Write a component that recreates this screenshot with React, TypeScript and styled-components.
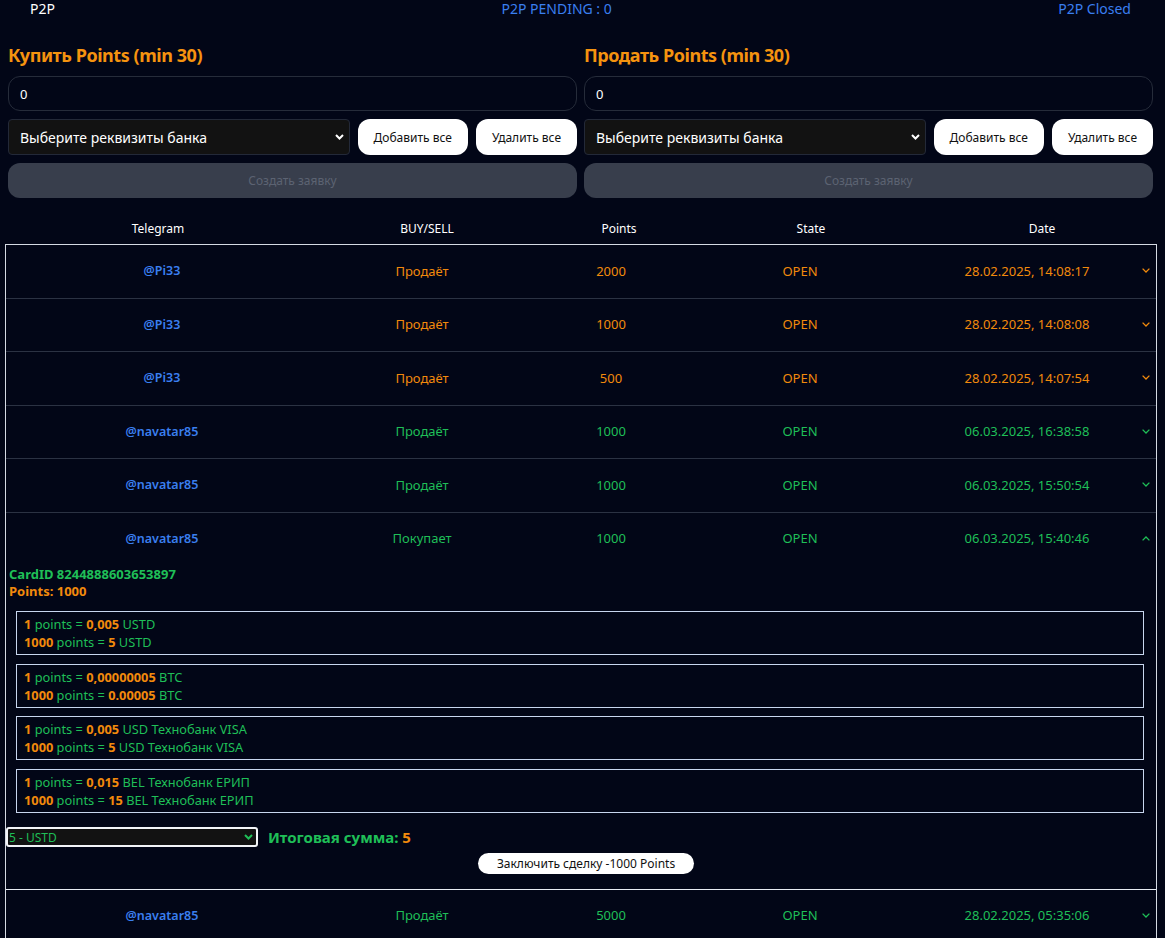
import React from "react";
import styled, { createGlobalStyle } from "styled-components";

const ORANGE = "#f28a0c";
const TITLE_ORANGE = "#f5930f";
const GREEN = "#1fbf57";
const BLUE = "#3a7ff0";

const Global = createGlobalStyle`
  html, body { margin: 0; padding: 0; background: #020617; }
  body { font-family: "Noto Sans", "Open Sans", sans-serif; color: #fff; }
  * { box-sizing: border-box; }
`;

const Page = styled.div`
  min-height: 938px;
  background: #020617;
  overflow: hidden;
`;

const TopBar = styled.div`
  display: flex;
  justify-content: space-between;
  padding: 0 34px 0 30px;
  height: 17px;
  font-size: 14px;
  line-height: 17px;
`;

const TopItem = styled.span<{ $tone?: "white" | "blue" }>`
  color: ${(p) => (p.$tone === "blue" ? BLUE : "#ffffff")};
`;

const Forms = styled.div`
  display: grid;
  grid-template-columns: 1fr 1fr;
  gap: 7px;
  padding: 0 12px 0 8px;
  margin-top: 26px;
`;

const FormCol = styled.div`
  display: flex;
  flex-direction: column;
  gap: 8px;
`;

const Title = styled.h2`
  margin: 0 0 1px;
  font-size: 18px;
  line-height: 24px;
  font-weight: 700;
  color: ${TITLE_ORANGE};
  letter-spacing: -0.45px;
`;

const AmountInput = styled.input`
  height: 35px;
  width: 100%;
  border: 1px solid #262c3a;
  border-radius: 12px;
  background: #020617;
  color: #fff;
  font-family: inherit;
  font-size: 13px;
  padding: 0 11px;
  outline: none;
`;

const SelectRow = styled.div`
  display: flex;
  gap: 8px;
  height: 36px;
`;

const SelectWrap = styled.div<{ $w?: string }>`
  position: relative;
  flex: ${(p) => (p.$w ? "none" : "1")};
  width: ${(p) => p.$w || "auto"};
  display: flex;
`;

const BankSelect = styled.select`
  appearance: none;
  width: 100%;
  height: 100%;
  background: #121212;
  color: #fff;
  border: 1px solid #232938;
  border-radius: 4px;
  font-family: inherit;
  font-size: 14px;
  padding: 0 28px 0 11px;
  outline: none;
`;

const SelectArrow = styled.span<{ $right: number; $color: string }>`
  position: absolute;
  right: ${(p) => p.$right}px;
  top: 50%;
  transform: translateY(-50%);
  display: flex;
  color: ${(p) => p.$color};
  pointer-events: none;
`;

const PillButton = styled.button`
  background: #fff;
  color: #111;
  border: none;
  border-radius: 12px;
  font-family: inherit;
  font-size: 12px;
  padding: 0 16px;
  white-space: nowrap;
`;

const CreateButton = styled.button`
  height: 35px;
  width: 100%;
  border: none;
  border-radius: 12px;
  background: #383e4c;
  color: #5c6372;
  font-family: inherit;
  font-size: 12px;
`;

const TableHead = styled.div`
  display: grid;
  grid-template-columns: 300px 238px 146px 238px 224px;
  padding-left: 8px;
  height: 31px;
  align-items: center;
  margin-top: 15px;
  font-size: 12px;
  color: #fff;
  text-align: center;
`;

const TableBox = styled.div`
  margin: 0 8px 0 5px;
  border: 1px solid #d5dae3;
  border-bottom: none;
`;

const Row = styled.div<{ $open?: boolean; $last?: boolean }>`
  border-bottom: ${(p) => (p.$open ? "1.5px solid #e8ecf3" : p.$last ? "none" : "1px solid #2b3243")};
`;

const RowMain = styled.div<{ $color: string }>`
  display: grid;
  grid-template-columns: 312px 208px 170px 208px 238px 12px;
  height: 52.5px;
  align-items: center;
  font-size: 13px;
  color: ${(p) => p.$color};
  text-align: center;
  padding-bottom: 1px;
`;

const Tg = styled.span`
  color: ${BLUE};
  font-weight: 600;
  font-size: 12.5px;
`;

const DateCell = styled.span`
  padding-left: 8px;
`;

const Chevron = styled.span`
  display: flex;
  justify-content: flex-start;
`;

const Detail = styled.div`
  padding: 1px 0 15px;
  display: flex;
  flex-direction: column;
`;

const InfoLine = styled.div<{ $color: string }>`
  padding-left: 3px;
  font-size: 13px;
  line-height: 17px;
  font-weight: 700;
  color: ${(p) => p.$color};
`;

const Rates = styled.div`
  display: flex;
  flex-direction: column;
  gap: 8.5px;
  margin: 11px 12px 0 10px;
`;

const RateBox = styled.div`
  border: 1px solid #c8d6ef;
  padding: 3px 7px;
  font-size: 12.8px;
  line-height: 18px;
  color: ${GREEN};
`;

const Num = styled.b`
  color: ${ORANGE};
  font-weight: 700;
`;

const PayRow = styled.div`
  display: flex;
  align-items: center;
  gap: 10px;
  margin-top: 14px;
`;

const PaySelect = styled.select`
  appearance: none;
  width: 252px;
  height: 20px;
  background: #121212;
  color: ${GREEN};
  border: 2px solid #f2f4f8;
  border-radius: 3px;
  font-family: inherit;
  font-size: 12px;
  padding: 0 0 0 1px;
  outline: none;
`;

const Total = styled.span`
  font-size: 15px;
  font-weight: 700;
  color: ${GREEN};
`;

const DealWrap = styled.div`
  display: flex;
  justify-content: center;
  margin-top: 6px;
  padding-left: 10px;
`;

const DealButton = styled.button`
  height: 21px;
  background: #fff;
  color: #111;
  border: none;
  border-radius: 11px;
  font-family: inherit;
  font-size: 12px;
  padding: 0 18.5px;
`;

const ChevronIcon = ({ up }: { up?: boolean }) => (
  <svg width="8" height="5" viewBox="0 0 8 5" fill="none">
    <polyline
      points={up ? "0.6,4.4 4,1 7.4,4.4" : "0.6,0.6 4,4 7.4,0.6"}
      stroke="currentColor"
      strokeWidth="1.3"
    />
  </svg>
);

const SelArrow = () => (
  <svg width="9" height="6" viewBox="0 0 9 6" fill="none">
    <polyline points="1,1 4.5,4.5 8,1" stroke="currentColor" strokeWidth="2" />
  </svg>
);

type Order = {
  tg: string;
  side: string;
  points: string;
  date: string;
  color: string;
  open?: boolean;
};

const orders: Order[] = [
  { tg: "@Pi33", side: "Продаёт", points: "2000", date: "28.02.2025, 14:08:17", color: ORANGE },
  { tg: "@Pi33", side: "Продаёт", points: "1000", date: "28.02.2025, 14:08:08", color: ORANGE },
  { tg: "@Pi33", side: "Продаёт", points: "500", date: "28.02.2025, 14:07:54", color: ORANGE },
  { tg: "@navatar85", side: "Продаёт", points: "1000", date: "06.03.2025, 16:38:58", color: GREEN },
  { tg: "@navatar85", side: "Продаёт", points: "1000", date: "06.03.2025, 15:50:54", color: GREEN },
  { tg: "@navatar85", side: "Покупает", points: "1000", date: "06.03.2025, 15:40:46", color: GREEN, open: true },
  { tg: "@navatar85", side: "Продаёт", points: "5000", date: "28.02.2025, 05:35:06", color: GREEN },
];

const rates = [
  { one: "0,005", all: "5", cur: "USTD" },
  { one: "0,00000005", all: "0.00005", cur: "BTC" },
  { one: "0,005", all: "5", cur: "USD Технобанк VISA" },
  { one: "0,015", all: "15", cur: "BEL Технобанк ЕРИП" },
];

const FormPanel = ({ title }: { title: string }) => (
  <FormCol>
    <Title>{title}</Title>
    <AmountInput defaultValue="0" />
    <SelectRow>
      <SelectWrap>
        <BankSelect defaultValue="">
          <option value="">Выберите реквизиты банка</option>
        </BankSelect>
        <SelectArrow $right={6} $color="#fff">
          <SelArrow />
        </SelectArrow>
      </SelectWrap>
      <PillButton>Добавить все</PillButton>
      <PillButton>Удалить все</PillButton>
    </SelectRow>
    <CreateButton disabled>Создать заявку</CreateButton>
  </FormCol>
);

export default function App() {
  return (
    <Page>
      <Global />
      <TopBar>
        <TopItem>P2P</TopItem>
        <TopItem $tone="blue">P2P PENDING : 0</TopItem>
        <TopItem $tone="blue">P2P Closed</TopItem>
      </TopBar>
      <Forms>
        <FormPanel title="Купить Points (min 30)" />
        <FormPanel title="Продать Points (min 30)" />
      </Forms>
      <TableHead>
        <span>Telegram</span>
        <span>BUY/SELL</span>
        <span>Points</span>
        <span>State</span>
        <span>Date</span>
      </TableHead>
      <TableBox>
        {orders.map((o, i) => (
          <Row key={i} $open={o.open} $last={i === orders.length - 1}>
            <RowMain $color={o.color}>
              <Tg>{o.tg}</Tg>
              <span>{o.side}</span>
              <span>{o.points}</span>
              <span>OPEN</span>
              <DateCell>{o.date}</DateCell>
              <Chevron>
                <ChevronIcon up={o.open} />
              </Chevron>
            </RowMain>
            {o.open && (
              <Detail>
                <InfoLine $color={GREEN}>CardID 8244888603653897</InfoLine>
                <InfoLine $color={ORANGE}>Points: 1000</InfoLine>
                <Rates>
                  {rates.map((r, k) => (
                    <RateBox key={k}>
                      <div>
                        <Num>1</Num> points = <Num>{r.one}</Num> {r.cur}
                      </div>
                      <div>
                        <Num>1000</Num> points = <Num>{r.all}</Num> {r.cur}
                      </div>
                    </RateBox>
                  ))}
                </Rates>
                <PayRow>
                  <SelectWrap $w="252px">
                    <PaySelect defaultValue="usdt">
                      <option value="usdt">5 - USTD</option>
                    </PaySelect>
                    <SelectArrow $right={5} $color={GREEN}>
                      <SelArrow />
                    </SelectArrow>
                  </SelectWrap>
                  <Total>
                    Итоговая сумма: <Num>5</Num>
                  </Total>
                </PayRow>
                <DealWrap>
                  <DealButton>Заключить сделку -1000 Points</DealButton>
                </DealWrap>
              </Detail>
            )}
          </Row>
        ))}
      </TableBox>
    </Page>
  );
}
